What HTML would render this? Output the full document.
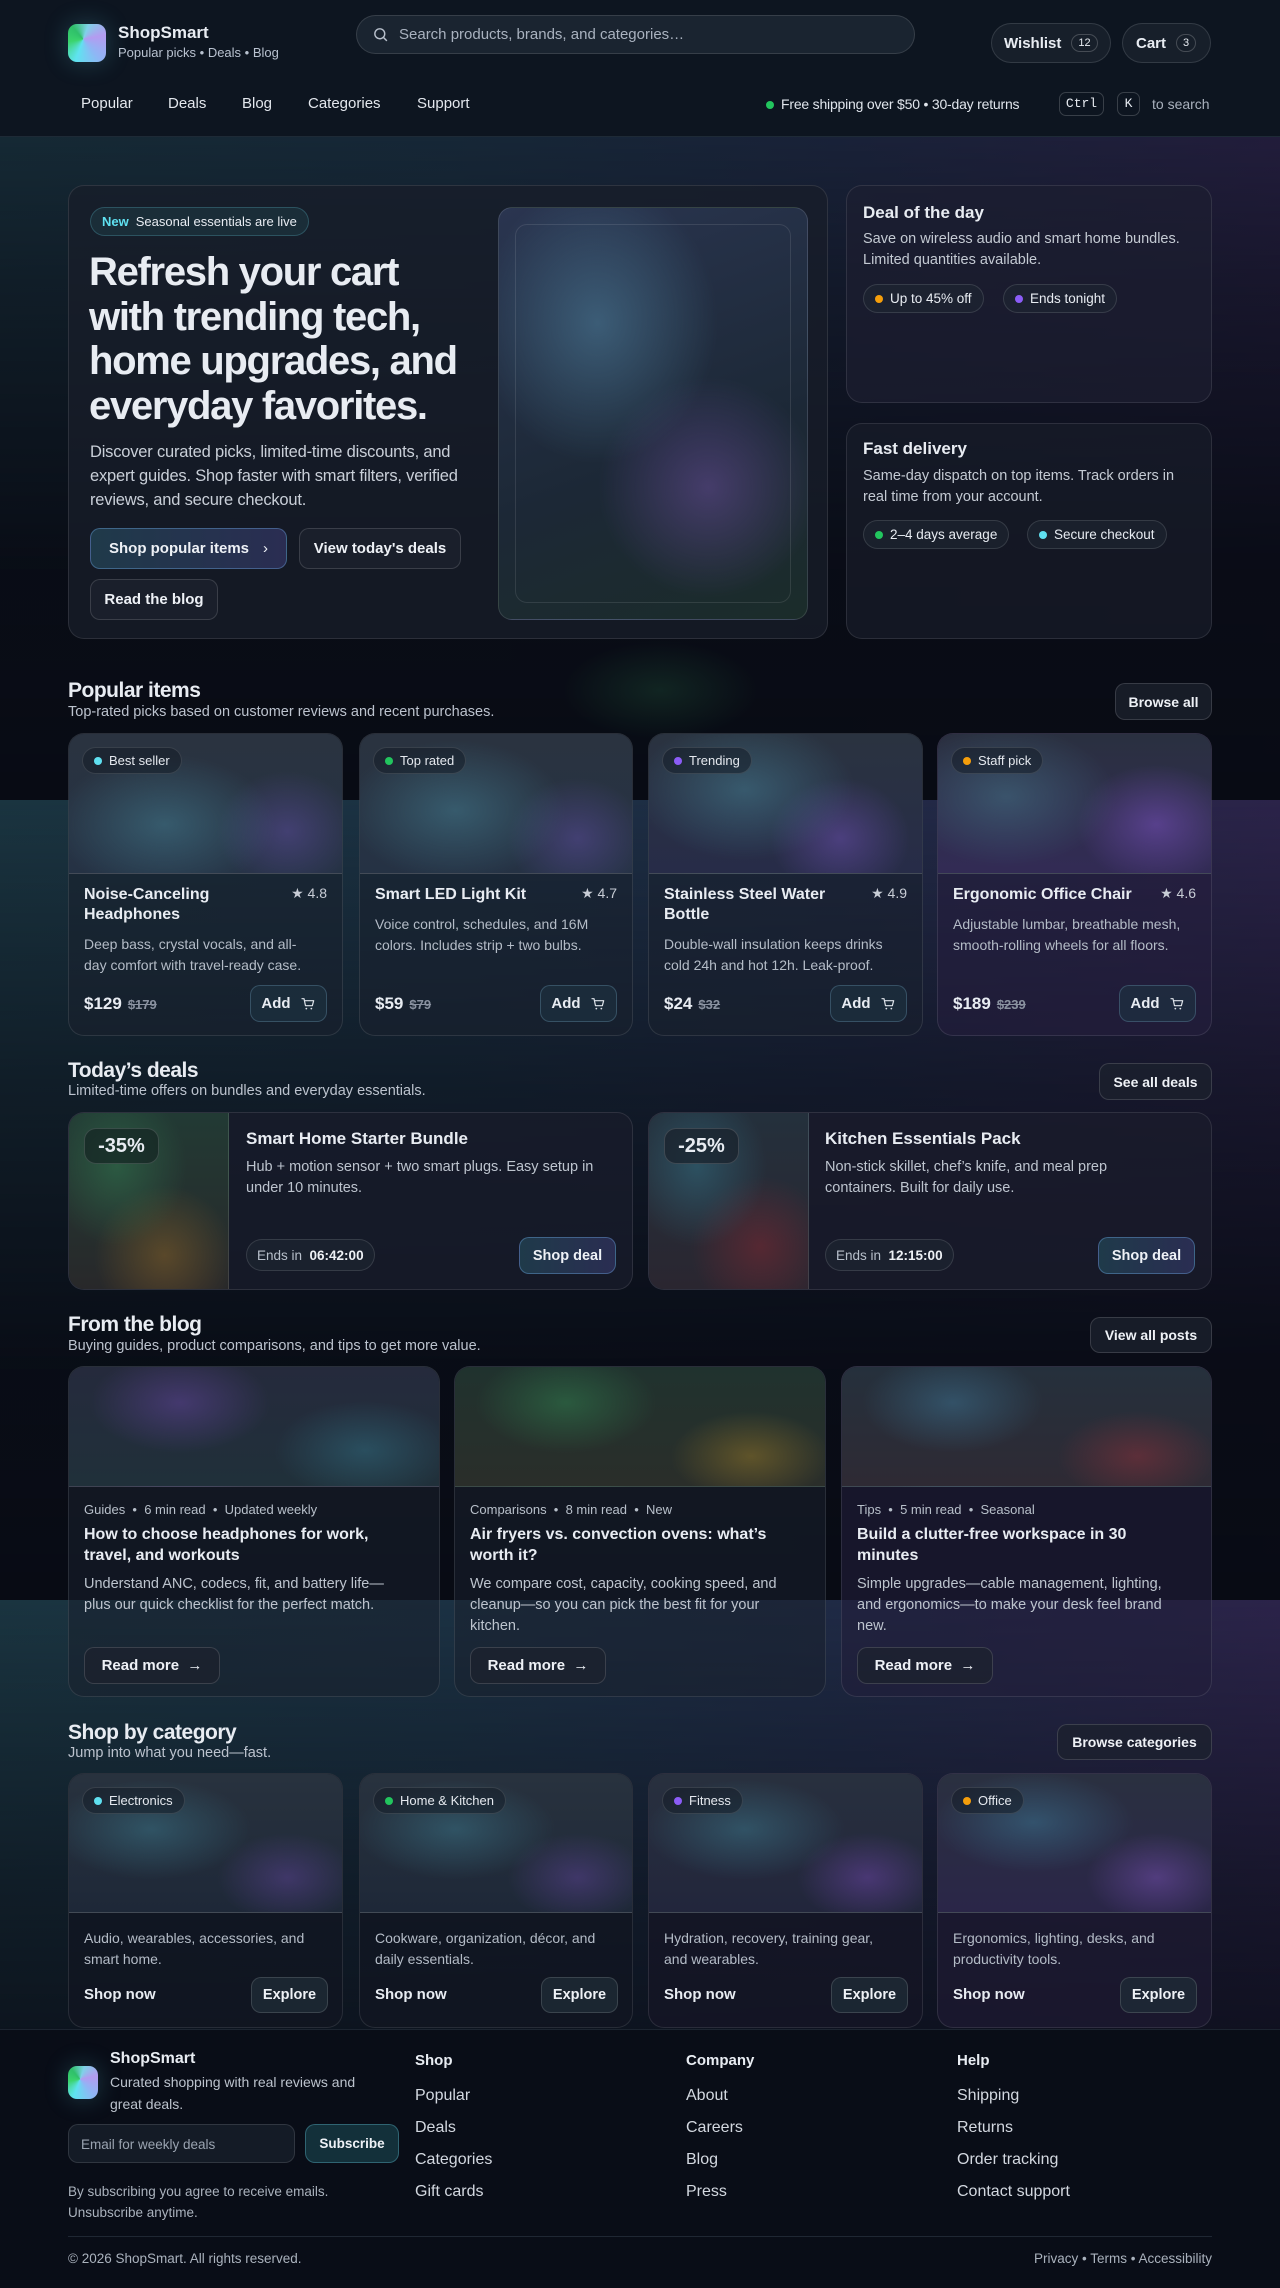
<!DOCTYPE html>
<html><head><meta charset="utf-8"><style>
*{box-sizing:border-box;margin:0;padding:0}
html,body{width:1280px;height:2288px;overflow:hidden}
body{font-family:"Liberation Sans",Arial,sans-serif;color:#e8ecf2;position:relative;
background-color:#080b14;
background-image:linear-gradient(to bottom,rgba(8,11,20,0) 0,rgba(8,11,20,.55) 35%,rgba(8,11,20,.95) 70%,#080b14 100%),linear-gradient(to right,#1a3440 0%,#1b3143 35%,#1f2a45 65%,#2b2349 100%);
background-size:1280px 800px;background-repeat:repeat-y}
.abs{position:absolute}
.hdr{position:absolute;left:0;top:0;width:1280px;height:137px;background:#0d1520;border-bottom:1px solid #1e2a36}
.logo{position:absolute;border-radius:9px;background:conic-gradient(from 200deg at 40% 40%,#5fe3f0,#3bd46d,#2fbf6a,#7fd2e8,#b49bf0,#8fb6f5,#5fe3f0);box-shadow:0 0 24px rgba(90,200,220,.25)}
.pill{position:absolute;border:1px solid rgba(255,255,255,.12);background:rgba(30,38,50,.6);border-radius:999px;display:flex;align-items:center}
.btn{position:absolute;border:1px solid rgba(255,255,255,.14);background:rgba(28,34,46,.75);border-radius:10px;display:flex;align-items:center;justify-content:center;font-weight:bold;font-size:15px;color:#eef1f6}
.card{position:absolute;border:1px solid rgba(255,255,255,.1);background:rgba(26,32,46,.55);border-radius:16px;overflow:hidden}
.t{position:absolute;white-space:nowrap}
.h2{font-size:21px;font-weight:bold;letter-spacing:-.5px}
.sub{font-size:14.5px;color:#bcc3ce}
.dot{display:inline-block;width:8px;height:8px;border-radius:50%;margin-right:7px}
.chip{position:absolute;left:13px;top:13px;height:27px;padding:0 11px;border-radius:999px;border:1px solid rgba(255,255,255,.12);background:rgba(20,28,38,.55);font-size:13px;display:flex;align-items:center;color:#e5e9ef}
.img{position:absolute;left:0;top:0;right:0;border-bottom:1px solid rgba(255,255,255,.12)}
.ptitle{position:absolute;left:15px;top:151px;width:190px;font-size:16px;font-weight:bold;line-height:20px}
.rate{position:absolute;right:15px;top:151px;font-size:14px;color:#c8cdd6}
.desc{position:absolute;left:15px;font-size:14px;line-height:20.5px;color:#b4bcc7}
.price{position:absolute;left:15px;top:260px;font-size:17px;font-weight:bold}
.price s{font-size:13px;color:#8a92a0;font-weight:bold;margin-left:6px}
.add{position:absolute;right:15px;top:251px;width:77px;height:37px;border-radius:10px;border:1px solid rgba(120,170,200,.3);background:rgba(30,52,66,.6);display:flex;align-items:center;justify-content:center;font-weight:bold;font-size:15px;gap:9px}
.fl a{display:block;font-size:16px;color:#d3d8e0;height:32px}
</style></head><body>
<svg width="0" height="0" style="position:absolute"><symbol id="cart" viewBox="0 0 24 24"><path d="M3 4h3l2.2 10.5h10.3L20.5 7H7.2" fill="none" stroke="#dfe4ea" stroke-width="1.8" stroke-linecap="round" stroke-linejoin="round"/><circle cx="9.5" cy="19" r="1.3" fill="#dfe4ea"/><circle cx="17" cy="19" r="1.3" fill="#dfe4ea"/></symbol></svg>

<!-- header -->
<div class="hdr">
 <div class="logo" style="left:68px;top:24px;width:38px;height:38px"></div>
 <div class="t" style="left:118px;top:23px;font-size:17px;font-weight:bold">ShopSmart</div>
 <div class="t" style="left:118px;top:45px;font-size:13px;color:#b9c2d0">Popular picks • Deals • Blog</div>
 <div class="pill" style="left:356px;top:15px;width:559px;height:39px;background:rgba(30,40,52,.8)">
  <svg style="margin-left:15px" width="17" height="17" viewBox="0 0 24 24" fill="none" stroke="#b8c0cc" stroke-width="2"><circle cx="11" cy="11" r="7"/><path d="M16.5 16.5L21 21"/></svg>
  <span style="margin-left:10px;font-size:15px;color:#a9b2bf">Search products, brands, and categories…</span></div>
 <div class="pill" style="left:991px;top:23px;width:120px;height:40px;padding-left:12px;font-weight:bold;font-size:15px">Wishlist<span style="margin-left:10px;border:1px solid rgba(255,255,255,.2);border-radius:999px;font-size:11px;font-weight:normal;padding:2px 6px">12</span></div>
 <div class="pill" style="left:1122px;top:23px;width:89px;height:40px;padding-left:13px;font-weight:bold;font-size:15px">Cart<span style="margin-left:10px;border:1px solid rgba(255,255,255,.2);border-radius:999px;font-size:11px;font-weight:normal;padding:2px 6px">3</span></div>
 <div class="t" style="left:81px;top:95px;font-size:15px;color:#e3e7ed">Popular</div>
 <div class="t" style="left:168px;top:95px;font-size:15px;color:#e3e7ed">Deals</div>
 <div class="t" style="left:242px;top:95px;font-size:15px;color:#e3e7ed">Blog</div>
 <div class="t" style="left:308px;top:95px;font-size:15px;color:#e3e7ed">Categories</div>
 <div class="t" style="left:417px;top:95px;font-size:15px;color:#e3e7ed">Support</div>
 <div class="t" style="left:766px;top:96px;font-size:14px;color:#e0e5ec;letter-spacing:-.2px"><span class="dot" style="background:#22c55e"></span>Free shipping over $50 • 30-day returns</div>
 <div class="t" style="left:1059px;top:92px;width:45px;height:24px;border:1px solid rgba(255,255,255,.18);border-radius:7px;font-family:'Liberation Mono',monospace;font-size:13px;text-align:center;line-height:22px">Ctrl</div>
 <div class="t" style="left:1117px;top:92px;width:23px;height:24px;border:1px solid rgba(255,255,255,.18);border-radius:7px;font-family:'Liberation Mono',monospace;font-size:13px;text-align:center;line-height:22px">K</div>
 <div class="t" style="left:1152px;top:96px;font-size:14px;color:#a9b1bd">to search</div>
</div>

<!-- hero -->
<div class="card" style="left:68px;top:185px;width:760px;height:454px;background:rgba(24,30,42,.75)">
 <div class="pill" style="left:21px;top:21px;height:29px;padding:0 11px;font-size:13px;background:rgba(30,60,70,.5);border-color:rgba(100,200,220,.25)"><b style="color:#5fe0f0;margin-right:7px">New</b>Seasonal essentials are live</div>
 <div class="t" style="left:20px;top:64px;font-size:40px;font-weight:bold;line-height:44.5px;letter-spacing:-1.3px">Refresh your cart<br>with trending tech,<br>home upgrades, and<br>everyday favorites.</div>
 <div class="t" style="left:21px;top:254px;font-size:16.5px;line-height:24px;color:#c9cfd8;letter-spacing:-.2px">Discover curated picks, limited-time discounts, and<br>expert guides. Shop faster with smart filters, verified<br>reviews, and secure checkout.</div>
 <div class="btn" style="left:21px;top:342px;width:197px;height:41px;background:linear-gradient(90deg,#1f3a4a,#2a2d52);border-color:rgba(110,170,230,.4)">Shop popular items<span style="margin-left:14px;font-weight:normal">›</span></div>
 <div class="btn" style="left:230px;top:342px;width:162px;height:41px">View today's deals</div>
 <div class="btn" style="left:21px;top:393px;width:128px;height:41px">Read the blog</div>
 <div class="abs" style="left:429px;top:21px;width:310px;height:413px;border-radius:14px;border:1px solid rgba(255,255,255,.12);background:radial-gradient(ellipse 120px 140px at 32% 28%,rgba(80,130,160,.55),transparent),radial-gradient(ellipse 110px 110px at 68% 68%,rgba(110,80,160,.5),transparent),linear-gradient(160deg,#2a3550,#1c2836 60%,#1b2c2a)">
  <div class="abs" style="left:16px;top:16px;right:16px;bottom:16px;border-radius:12px;border:1px solid rgba(255,255,255,.1)"></div></div>
</div>
<div class="card" style="left:846px;top:185px;width:366px;height:218px;background:rgba(28,30,48,.7)">
 <div class="t" style="left:16px;top:17px;font-size:17px;font-weight:bold">Deal of the day</div>
 <div class="t" style="left:16px;top:43px;font-size:14.5px;line-height:21px;color:#c4cad3">Save on wireless audio and smart home bundles.<br>Limited quantities available.</div>
 <div class="pill" style="left:16px;top:98px;height:29px;padding:0 11px;font-size:13.5px"><span class="dot" style="background:#f59e0b"></span>Up to 45% off</div>
 <div class="pill" style="left:156px;top:98px;height:29px;padding:0 11px;font-size:13.5px"><span class="dot" style="background:#8b5cf6"></span>Ends tonight</div>
</div>
<div class="card" style="left:846px;top:423px;width:366px;height:216px;background:rgba(24,28,42,.7)">
 <div class="t" style="left:16px;top:15px;font-size:17px;font-weight:bold">Fast delivery</div>
 <div class="t" style="left:16px;top:42px;font-size:14.5px;line-height:21px;color:#c4cad3">Same-day dispatch on top items. Track orders in<br>real time from your account.</div>
 <div class="pill" style="left:16px;top:96px;height:29px;padding:0 11px;font-size:13.5px"><span class="dot" style="background:#22c55e"></span>2–4 days average</div>
 <div class="pill" style="left:180px;top:96px;height:29px;padding:0 11px;font-size:13.5px"><span class="dot" style="background:#5fe0f0"></span>Secure checkout</div>
</div>

<!-- popular -->
<div class="abs" style="left:560px;top:640px;width:200px;height:100px;background:radial-gradient(ellipse,rgba(40,110,70,.25),transparent 70%)"></div>
<div class="t h2" style="left:68px;top:679px">Popular items</div>
<div class="t sub" style="left:68px;top:704px">Top-rated picks based on customer reviews and recent purchases.</div>
<div class="btn" style="left:1115px;top:683px;width:97px;height:37px;font-size:14px">Browse all</div>

<div class="card" style="left:68px;top:733px;width:275px;height:303px">
 <div class="img" style="height:140px;background:radial-gradient(ellipse 110px 70px at 35% 65%,rgba(70,130,150,.5),transparent),radial-gradient(ellipse 70px 60px at 80% 70%,rgba(100,80,170,.45),transparent),linear-gradient(#2a3340,#253244)"></div>
 <div class="chip"><span class="dot" style="background:#5fe0f0"></span>Best seller</div>
 <div class="ptitle">Noise-Canceling<br>Headphones</div><div class="rate">★ 4.8</div>
 <div class="desc" style="top:200px">Deep bass, crystal vocals, and all-<br>day comfort with travel-ready case.</div>
 <div class="price">$129<s>$179</s></div><div class="add">Add <svg width="16" height="16"><use href="#cart"/></svg></div>
</div>
<div class="card" style="left:359px;top:733px;width:274px;height:303px">
 <div class="img" style="height:140px;background:radial-gradient(ellipse 110px 70px at 35% 55%,rgba(70,130,150,.5),transparent),radial-gradient(ellipse 70px 60px at 80% 75%,rgba(100,80,170,.45),transparent),linear-gradient(#2a3340,#253244)"></div>
 <div class="chip"><span class="dot" style="background:#22c55e"></span>Top rated</div>
 <div class="ptitle">Smart LED Light Kit</div><div class="rate">★ 4.7</div>
 <div class="desc" style="top:180px">Voice control, schedules, and 16M<br>colors. Includes strip + two bulbs.</div>
 <div class="price">$59<s>$79</s></div><div class="add">Add <svg width="16" height="16"><use href="#cart"/></svg></div>
</div>
<div class="card" style="left:648px;top:733px;width:275px;height:303px">
 <div class="img" style="height:140px;background:radial-gradient(ellipse 110px 70px at 35% 40%,rgba(70,130,150,.5),transparent),radial-gradient(ellipse 70px 60px at 70% 75%,rgba(110,80,180,.5),transparent),linear-gradient(#2a3340,#272c48)"></div>
 <div class="chip"><span class="dot" style="background:#8b5cf6"></span>Trending</div>
 <div class="ptitle">Stainless Steel Water<br>Bottle</div><div class="rate">★ 4.9</div>
 <div class="desc" style="top:200px">Double-wall insulation keeps drinks<br>cold 24h and hot 12h. Leak-proof.</div>
 <div class="price">$24<s>$32</s></div><div class="add">Add <svg width="16" height="16"><use href="#cart"/></svg></div>
</div>
<div class="card" style="left:937px;top:733px;width:275px;height:303px;background:rgba(36,30,62,.6)">
 <div class="img" style="height:140px;background:radial-gradient(ellipse 110px 70px at 25% 45%,rgba(70,120,140,.5),transparent),radial-gradient(ellipse 80px 60px at 80% 65%,rgba(120,80,190,.55),transparent),linear-gradient(#2a3040,#322b55)"></div>
 <div class="chip"><span class="dot" style="background:#f59e0b"></span>Staff pick</div>
 <div class="ptitle">Ergonomic Office Chair</div><div class="rate">★ 4.6</div>
 <div class="desc" style="top:180px">Adjustable lumbar, breathable mesh,<br>smooth-rolling wheels for all floors.</div>
 <div class="price">$189<s>$239</s></div><div class="add">Add <svg width="16" height="16"><use href="#cart"/></svg></div>
</div>

<!-- deals -->
<div class="t h2" style="left:68px;top:1059px">Today’s deals</div>
<div class="t sub" style="left:68px;top:1083px">Limited-time offers on bundles and everyday essentials.</div>
<div class="btn" style="left:1099px;top:1063px;width:113px;height:37px;font-size:14px">See all deals</div>
<div class="card" style="left:68px;top:1112px;width:565px;height:178px;background:rgba(24,28,42,.8)">
 <div class="abs" style="left:0;top:0;width:160px;height:178px;border-right:1px solid rgba(255,255,255,.12);background:radial-gradient(ellipse 70px 80px at 30% 30%,rgba(50,120,80,.55),transparent),radial-gradient(ellipse 70px 70px at 60% 80%,rgba(140,100,40,.5),transparent),linear-gradient(#223a34,#28282a)"></div>
 <div class="abs" style="left:15px;top:15px;width:75px;height:36px;border-radius:12px;border:1px solid rgba(255,255,255,.15);background:rgba(20,36,34,.7);font-size:20px;font-weight:bold;text-align:center;line-height:34px">-35%</div>
 <div class="t" style="left:177px;top:16px;font-size:17px;font-weight:bold">Smart Home Starter Bundle</div>
 <div class="t" style="left:177px;top:44px;font-size:14.5px;line-height:21px;color:#bdc4ce">Hub + motion sensor + two smart plugs. Easy setup in<br>under 10 minutes.</div>
 <div class="pill" style="left:177px;top:126px;height:32px;padding:0 10px;font-size:13.5px;color:#b8c0cb">Ends in&nbsp;&nbsp;<b style="color:#eef1f5">06:42:00</b></div>
 <div class="btn" style="left:450px;top:124px;width:97px;height:37px;background:linear-gradient(90deg,#1f3a4a,#2a2d52);border-color:rgba(110,170,230,.4);font-size:14.5px">Shop deal</div>
</div>
<div class="card" style="left:648px;top:1112px;width:564px;height:178px;background:rgba(26,28,44,.8)">
 <div class="abs" style="left:0;top:0;width:160px;height:178px;border-right:1px solid rgba(255,255,255,.12);background:radial-gradient(ellipse 70px 80px at 30% 30%,rgba(50,110,130,.55),transparent),radial-gradient(ellipse 70px 70px at 70% 75%,rgba(130,40,50,.5),transparent),linear-gradient(#24303c,#2a2630)"></div>
 <div class="abs" style="left:15px;top:15px;width:75px;height:36px;border-radius:12px;border:1px solid rgba(255,255,255,.15);background:rgba(24,32,42,.7);font-size:20px;font-weight:bold;text-align:center;line-height:34px">-25%</div>
 <div class="t" style="left:176px;top:16px;font-size:17px;font-weight:bold">Kitchen Essentials Pack</div>
 <div class="t" style="left:176px;top:44px;font-size:14.5px;line-height:21px;color:#bdc4ce">Non-stick skillet, chef’s knife, and meal prep<br>containers. Built for daily use.</div>
 <div class="pill" style="left:176px;top:126px;height:32px;padding:0 10px;font-size:13.5px;color:#b8c0cb">Ends in&nbsp;&nbsp;<b style="color:#eef1f5">12:15:00</b></div>
 <div class="btn" style="left:449px;top:124px;width:97px;height:37px;background:linear-gradient(90deg,#1f3a4a,#2a2d52);border-color:rgba(110,170,230,.4);font-size:14.5px">Shop deal</div>
</div>

<!-- blog -->
<div class="t h2" style="left:68px;top:1313px">From the blog</div>
<div class="t sub" style="left:68px;top:1338px">Buying guides, product comparisons, and tips to get more value.</div>
<div class="btn" style="left:1090px;top:1317px;width:122px;height:36px;font-size:14px">View all posts</div>
<div class="card" style="left:68px;top:1366px;width:372px;height:331px">
 <div class="img" style="height:120px;background:radial-gradient(ellipse 90px 50px at 30% 30%,rgba(100,70,160,.5),transparent),radial-gradient(ellipse 90px 50px at 80% 70%,rgba(50,110,130,.5),transparent),linear-gradient(#252a3c,#20303a)"></div>
 <div class="t" style="left:15px;top:135px;font-size:13px;color:#b8c0ca">Guides &nbsp;•&nbsp; 6 min read &nbsp;•&nbsp; Updated weekly</div>
 <div class="t" style="left:15px;top:158px;font-size:16px;font-weight:bold;line-height:20.5px">How to choose headphones for work,<br>travel, and workouts</div>
 <div class="t" style="left:15px;top:207px;font-size:14.5px;line-height:21px;color:#bdc4ce">Understand ANC, codecs, fit, and battery life—<br>plus our quick checklist for the perfect match.</div>
 <div class="btn" style="left:15px;top:280px;width:136px;height:37px">Read more&nbsp;&nbsp;→</div>
</div>
<div class="card" style="left:454px;top:1366px;width:372px;height:331px">
 <div class="img" style="height:120px;background:radial-gradient(ellipse 90px 50px at 30% 30%,rgba(50,130,80,.5),transparent),radial-gradient(ellipse 80px 45px at 80% 75%,rgba(150,120,40,.5),transparent),linear-gradient(#20322e,#2a2e2a)"></div>
 <div class="t" style="left:15px;top:135px;font-size:13px;color:#b8c0ca">Comparisons &nbsp;•&nbsp; 8 min read &nbsp;•&nbsp; New</div>
 <div class="t" style="left:15px;top:158px;font-size:16px;font-weight:bold;line-height:20.5px">Air fryers vs. convection ovens: what’s<br>worth it?</div>
 <div class="t" style="left:15px;top:207px;font-size:14.5px;line-height:21px;color:#bdc4ce">We compare cost, capacity, cooking speed, and<br>cleanup—so you can pick the best fit for your<br>kitchen.</div>
 <div class="btn" style="left:15px;top:280px;width:136px;height:37px">Read more&nbsp;&nbsp;→</div>
</div>
<div class="card" style="left:841px;top:1366px;width:371px;height:331px;background:rgba(34,30,58,.6)">
 <div class="img" style="height:120px;background:radial-gradient(ellipse 90px 50px at 30% 30%,rgba(60,110,140,.55),transparent),radial-gradient(ellipse 80px 45px at 80% 75%,rgba(140,50,60,.5),transparent),linear-gradient(#25303c,#2e2a34)"></div>
 <div class="t" style="left:15px;top:135px;font-size:13px;color:#b8c0ca">Tips &nbsp;•&nbsp; 5 min read &nbsp;•&nbsp; Seasonal</div>
 <div class="t" style="left:15px;top:158px;font-size:16px;font-weight:bold;line-height:20.5px">Build a clutter-free workspace in 30<br>minutes</div>
 <div class="t" style="left:15px;top:207px;font-size:14.5px;line-height:21px;color:#bdc4ce">Simple upgrades—cable management, lighting,<br>and ergonomics—to make your desk feel brand<br>new.</div>
 <div class="btn" style="left:15px;top:280px;width:136px;height:37px">Read more&nbsp;&nbsp;→</div>
</div>

<!-- category -->
<div class="t h2" style="left:68px;top:1721px">Shop by category</div>
<div class="t sub" style="left:68px;top:1745px">Jump into what you need—fast.</div>
<div class="btn" style="left:1057px;top:1724px;width:155px;height:36px;font-size:14px">Browse categories</div>
<div class="card" style="left:68px;top:1773px;width:275px;height:255px;background:rgba(18,22,34,.75)">
 <div class="img" style="height:139px;background:radial-gradient(ellipse 100px 50px at 30% 40%,rgba(60,120,140,.5),transparent),radial-gradient(ellipse 70px 45px at 80% 75%,rgba(100,70,160,.45),transparent),linear-gradient(#28323e,#1e2838)"></div>
 <div class="chip"><span class="dot" style="background:#5fe0f0"></span>Electronics</div>
 <div class="desc" style="top:154px">Audio, wearables, accessories, and<br>smart home.</div>
 <div class="t" style="left:15px;top:212px;font-size:15px;font-weight:bold">Shop now</div>
 <div class="btn" style="left:182px;top:203px;width:77px;height:36px;font-size:14.5px;background:rgba(30,42,54,.8)">Explore</div>
</div>
<div class="card" style="left:359px;top:1773px;width:274px;height:255px;background:rgba(18,22,34,.75)">
 <div class="img" style="height:139px;background:radial-gradient(ellipse 100px 50px at 35% 40%,rgba(60,120,140,.5),transparent),radial-gradient(ellipse 70px 45px at 80% 75%,rgba(100,70,160,.45),transparent),linear-gradient(#28323e,#1e2838)"></div>
 <div class="chip"><span class="dot" style="background:#22c55e"></span>Home &amp; Kitchen</div>
 <div class="desc" style="top:154px">Cookware, organization, décor, and<br>daily essentials.</div>
 <div class="t" style="left:15px;top:212px;font-size:15px;font-weight:bold">Shop now</div>
 <div class="btn" style="left:181px;top:203px;width:77px;height:36px;font-size:14.5px;background:rgba(30,42,54,.8)">Explore</div>
</div>
<div class="card" style="left:648px;top:1773px;width:275px;height:255px;background:rgba(22,22,38,.75)">
 <div class="img" style="height:139px;background:radial-gradient(ellipse 100px 50px at 35% 40%,rgba(60,120,140,.5),transparent),radial-gradient(ellipse 70px 45px at 80% 75%,rgba(110,70,170,.5),transparent),linear-gradient(#28303e,#22263c)"></div>
 <div class="chip"><span class="dot" style="background:#8b5cf6"></span>Fitness</div>
 <div class="desc" style="top:154px">Hydration, recovery, training gear,<br>and wearables.</div>
 <div class="t" style="left:15px;top:212px;font-size:15px;font-weight:bold">Shop now</div>
 <div class="btn" style="left:182px;top:203px;width:77px;height:36px;font-size:14.5px;background:rgba(30,42,54,.8)">Explore</div>
</div>
<div class="card" style="left:937px;top:1773px;width:275px;height:255px;background:rgba(30,26,50,.75)">
 <div class="img" style="height:139px;background:radial-gradient(ellipse 100px 50px at 35% 35%,rgba(60,120,150,.5),transparent),radial-gradient(ellipse 70px 45px at 80% 75%,rgba(120,80,180,.5),transparent),linear-gradient(#2a3040,#2a2648)"></div>
 <div class="chip"><span class="dot" style="background:#f59e0b"></span>Office</div>
 <div class="desc" style="top:154px">Ergonomics, lighting, desks, and<br>productivity tools.</div>
 <div class="t" style="left:15px;top:212px;font-size:15px;font-weight:bold">Shop now</div>
 <div class="btn" style="left:182px;top:203px;width:77px;height:36px;font-size:14.5px;background:rgba(30,42,54,.8)">Explore</div>
</div>

<!-- footer -->
<div class="abs" style="left:0;top:2029px;width:1280px;height:259px;background:#090d17;border-top:1px solid #1c2430"></div>
<div class="logo" style="left:68px;top:2066px;width:30px;height:33px"></div>
<div class="t" style="left:110px;top:2050px;font-size:16px;font-weight:bold">ShopSmart</div>
<div class="t" style="left:110px;top:2071px;font-size:14px;line-height:22px;color:#bcc3cd">Curated shopping with real reviews and<br>great deals.</div>
<div class="abs" style="left:68px;top:2124px;width:227px;height:39px;border-radius:10px;border:1px solid rgba(255,255,255,.12);background:#141b26;font-size:13.5px;color:#9aa3b0;padding:12px 12px">Email for weekly deals</div>
<div class="btn" style="left:305px;top:2124px;width:94px;height:39px;font-size:13.5px;background:#13303a;border-color:rgba(90,180,200,.4)">Subscribe</div>
<div class="t" style="left:68px;top:2182px;font-size:13.5px;line-height:20.5px;color:#aab2bd">By subscribing you agree to receive emails.<br>Unsubscribe anytime.</div>
<div class="t" style="left:415px;top:2052px;font-size:15px;font-weight:bold">Shop</div>
<div class="abs fl" style="left:415px;top:2087px"><a>Popular</a><a>Deals</a><a>Categories</a><a>Gift cards</a></div>
<div class="t" style="left:686px;top:2052px;font-size:15px;font-weight:bold">Company</div>
<div class="abs fl" style="left:686px;top:2087px"><a>About</a><a>Careers</a><a>Blog</a><a>Press</a></div>
<div class="t" style="left:957px;top:2052px;font-size:15px;font-weight:bold">Help</div>
<div class="abs fl" style="left:957px;top:2087px"><a>Shipping</a><a>Returns</a><a>Order tracking</a><a>Contact support</a></div>
<div class="abs" style="left:68px;top:2236px;width:1144px;height:1px;background:#1f2733"></div>
<div class="t" style="left:68px;top:2251px;font-size:13.5px;color:#aab2bd">© 2026 ShopSmart. All rights reserved.</div>
<div class="t" style="right:68px;top:2251px;font-size:13.5px;color:#aab2bd">Privacy • Terms • Accessibility</div>
</body></html>
